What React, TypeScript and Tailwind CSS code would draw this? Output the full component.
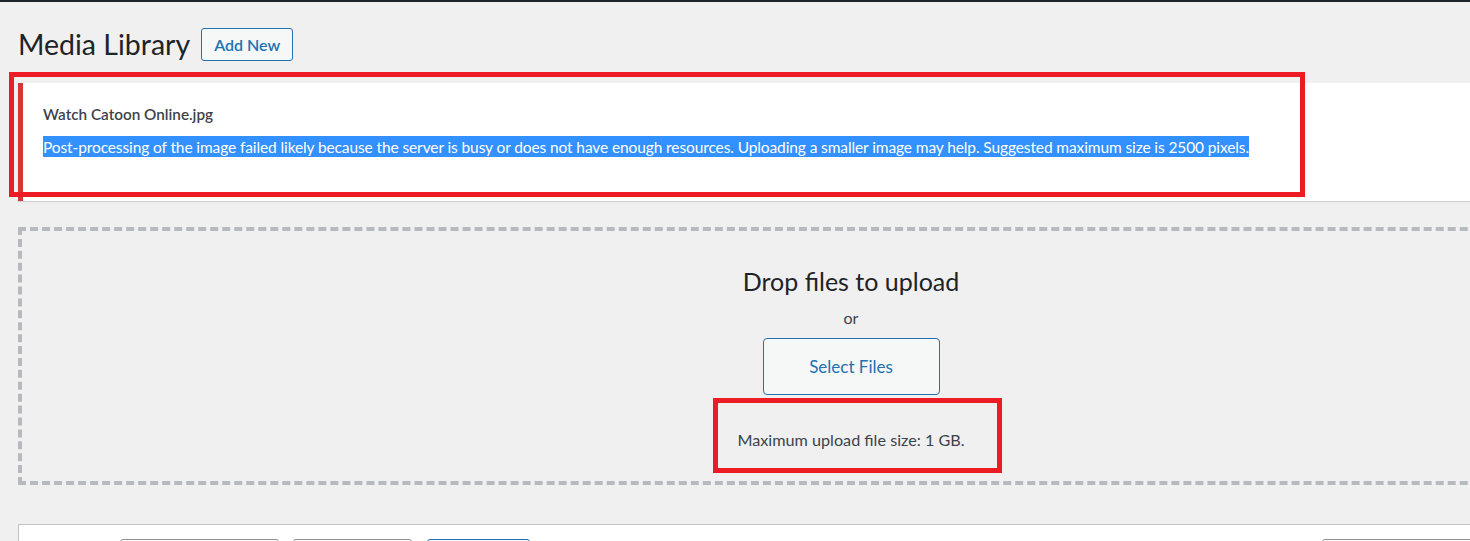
const sans = "font-['Lato','Noto_Sans',sans-serif]";

function Notice() {
  return (
    <div className="mt-[22px] h-[118px] border-l-[5px] border-[#d63638] bg-white pl-[20px] pt-[20px] shadow-[0_1px_1px_rgba(0,0,0,0.12)]">
      <p className="text-[15.3px] leading-[22px] font-semibold text-[#3c434a]">
        Watch Catoon Online.jpg
      </p>
      <p className="mt-[10px] text-[15.5px] leading-[22px] tracking-[-0.11px] text-[#3c434a]">
        <span className="bg-[#3390ff] py-[1.5px] text-white">
          Post-processing of the image failed likely because the server is busy or does not have enough resources. Uploading a smaller image may help. Suggested maximum size is 2500 pixels.
        </span>
      </p>
    </div>
  );
}

function DropZone() {
  return (
    <div className="mt-[26px] flex h-[258px] flex-col items-center border-4 border-dashed border-[#b6babe] pt-[33px]">
      <p className="text-[25px] leading-[34px] text-[#1d2327]">Drop files to upload</p>
      <p className="mt-[9px] text-[16px] leading-[22px] text-[#3c434a]">or</p>
      <button className="mt-[9px] h-[57px] w-[177px] rounded-[4px] border border-[#2271b1] bg-[#f6f7f7] text-[17px] text-[#2271b1]">
        Select Files
      </button>
      <p className="mt-[34px] text-[16.2px] leading-[22px] text-[#3c434a]">
        Maximum upload file size: 1 GB.
      </p>
    </div>
  );
}

function Toolbar() {
  return (
    <div className="mt-[39px] flex h-[40px] border-l border-t border-[#c3c4c7] bg-white pl-[101px] pt-[14px]">
      <div className="h-[32px] w-[159px] rounded-[3px] border border-[#8c8f94] bg-white" />
      <div className="ml-[14px] h-[32px] w-[119px] rounded-[3px] border border-[#8c8f94] bg-white" />
      <div className="ml-[15px] h-[32px] w-[103px] rounded-[3px] border border-[#2271b1] bg-[#f6f7f7]" />
      <div className="ml-[792px] h-[32px] w-[200px] rounded-[3px] border border-[#8c8f94] bg-white" />
    </div>
  );
}

export default function App() {
  return (
    <div className={`relative h-[541px] w-[1470px] overflow-hidden bg-[#f0f0f1] ${sans}`}>
      <div className="h-[2px] bg-[#1d2327]" />
      <div className="w-[1702px] px-[18px]">
        <div className="mt-[26px] flex h-[33px] items-center gap-[11px]">
          <h1 className="text-[28.5px] leading-[33px] font-normal text-[#1d2327]">Media Library</h1>
          <button className="h-[33px] rounded-[3px] border border-[#2271b1] bg-[#f6f7f7] px-[12px] text-[16px] font-semibold text-[#2271b1]">
            Add New
          </button>
        </div>
        <Notice />
        <DropZone />
        <Toolbar />
      </div>

      {/* annotation boxes drawn over the screenshot */}
      <div className="absolute left-[9px] top-[72px] h-[125px] w-[1296px] border-[5px] border-[#ed1c24]" />
      <div className="absolute left-[713px] top-[398px] h-[75px] w-[289px] border-[5px] border-[#ed1c24]" />
    </div>
  );
}
